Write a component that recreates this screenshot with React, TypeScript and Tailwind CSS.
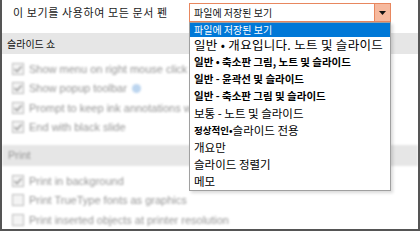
import React from "react";

const kr = "font-['Noto_Sans_CJK_KR',sans-serif]";
const en = "font-['Liberation_Sans','Noto_Sans',sans-serif]";

type Opt = { label: React.ReactNode; cls: string };

const options: Opt[] = [
  { label: "일반 • 개요입니다. 노트 및 슬라이드", cls: "text-[12.5px] tracking-[0.3px]" },
  { label: "일반 • 축소판 그림, 노트 및 슬라이드", cls: "text-[10.5px] font-semibold" },
  { label: "일반 - 윤곽선 및 슬라이드", cls: "text-[10.5px] font-semibold" },
  { label: "일반 - 축소판 그림 및 슬라이드", cls: "text-[10.5px] font-semibold" },
  { label: "보통 - 노트 및 슬라이드", cls: "text-[11.5px]" },
  {
    label: (
      <>
        <span className="text-[9.5px] font-semibold">정상적인•</span> 슬라이드 전용
      </>
    ),
    cls: "text-[11.5px]",
  },
  { label: "개요만", cls: "text-[11.5px]" },
  { label: "슬라이드 정렬기", cls: "text-[11.5px]" },
  { label: "메모", cls: "text-[11.5px]" },
];

const Check = ({ checked }: { checked: boolean }) => (
  <span className="w-[12px] h-[12px] border border-[#bcbcbc] bg-[#f4f4f4] flex items-center justify-center shrink-0">
    {checked && (
      <svg width="10" height="10" viewBox="0 0 10 10">
        <path d="M1.5 5.2 L4 7.6 L8.6 2.2" stroke="#a0a0a0" strokeWidth="1.6" fill="none" />
      </svg>
    )}
  </span>
);

const Row = ({ text, checked, info }: { text: string; checked: boolean; info?: boolean }) => (
  <div className="h-[19.5px] flex items-center gap-[5px] pl-[10px]">
    <Check checked={checked} />
    <span className="text-[11px] text-[#959595] whitespace-nowrap">{text}</span>
    {info && <span className="w-[9px] h-[9px] rounded-full bg-[#bcd5ef]" />}
  </div>
);

export default function App() {
  return (
    <div className={`w-[420px] h-[231px] relative overflow-hidden bg-white border-l-2 border-r-2 border-b-2 border-[#555555] ${kr}`}>
      <div className="h-[33px] flex items-start pt-[3px]">
        <div className="h-[19px] flex items-center pl-[11px] w-[187px] text-[11px] text-[#1a1a1a] tracking-[0.6px] whitespace-nowrap">
          이 보기를 사용하여 모든 문서 펜
        </div>
        <div className="relative w-[202px] h-[19px]">
          <div className="h-full flex border border-[#e8875f] bg-white">
            <div className="flex-1 flex items-center pl-[4px] text-[10px] leading-none text-[#111] whitespace-nowrap">
              파일에 저장된 보기
            </div>
            <div className="w-[16px] bg-[#f6b99e] border-l border-[#e8875f] flex items-center justify-center">
              <svg width="7" height="4" viewBox="0 0 7 4">
                <path d="M0 0 H7 L3.5 4 Z" fill="#111" />
              </svg>
            </div>
          </div>
          <div className="absolute left-0 top-[19px] w-[202px] bg-white border border-[#a0a0a0] shadow-[2px_2px_3px_rgba(0,0,0,0.15)] z-10">
            <div className="h-[14px] bg-[#0078d7] text-white text-[10px] leading-none flex items-center pl-[4px] whitespace-nowrap">
              파일에 저장된 보기
            </div>
            {options.map((o, i) => (
              <div key={i} className={`h-[17px] flex items-center pl-[4px] leading-none text-black whitespace-nowrap ${o.cls}`}>
                {o.label}
              </div>
            ))}
          </div>
        </div>
      </div>

      <div className="h-[21px] bg-[#e6e6e6] flex items-center pl-[5px] text-[10px] text-[#111]">
        슬라이드 쇼
      </div>
      <div className={`blur-[1.3px] ${en}`}>
        <div className="pt-[5px] pb-[8px]">
          <Row text="Show menu on right mouse click" checked info />
          <Row text="Show popup toolbar" checked info />
          <Row text="Prompt to keep ink annotations when exiting" checked />
          <Row text="End with black slide" checked />
        </div>
        <div className="h-[21px] bg-[#e6e6e6] flex items-center pl-[6px] text-[11px] text-[#959595]">
          Print
        </div>
        <div className="pt-[5px]">
          <Row text="Print in background" checked />
          <Row text="Print TrueType fonts as graphics" checked={false} />
          <Row text="Print inserted objects at printer resolution" checked={false} />
        </div>
      </div>
    </div>
  );
}
